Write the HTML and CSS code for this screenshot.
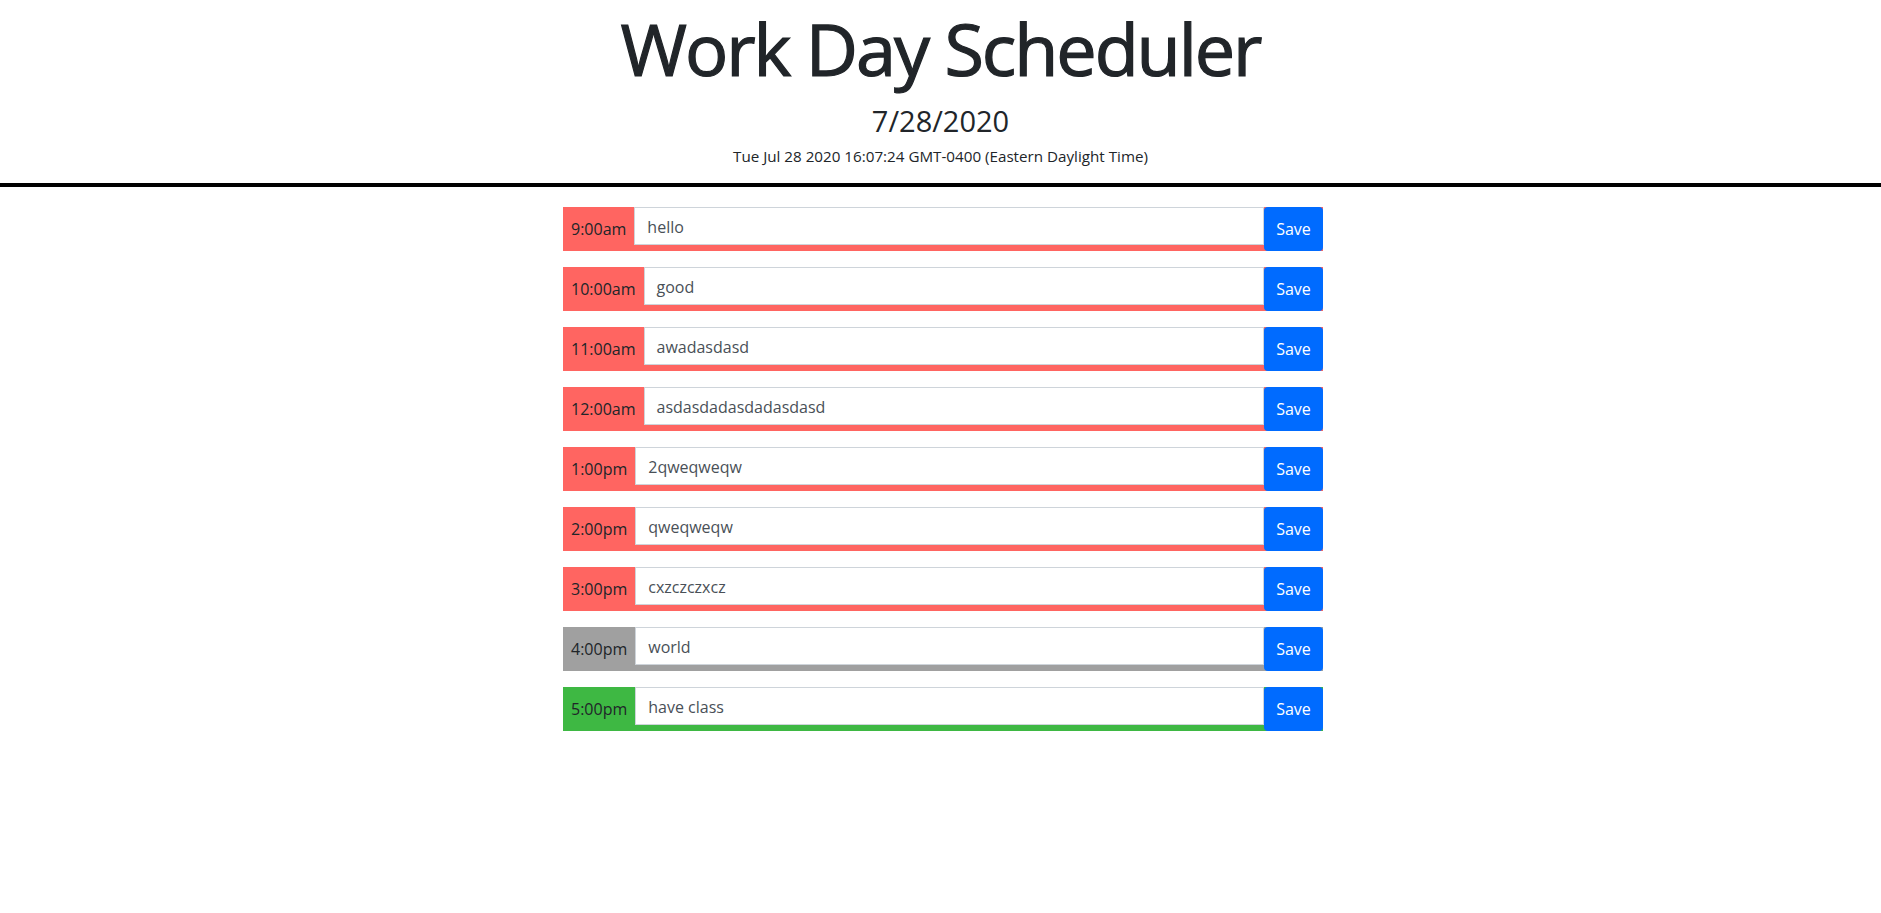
FILE: index.html
```html
<!DOCTYPE html>
<html lang="en">
<head>
<meta charset="utf-8">
<title>Work Day Scheduler</title>
<link rel="stylesheet" href="styles.css">
</head>
<body>
<header class="jumbotron">
  <h1 class="title">Work Day Scheduler</h1>
  <p class="date">7/28/2020</p>
  <p class="now">Tue Jul 28 2020 16:07:24 GMT-0400 (Eastern Daylight Time)</p>
</header>
<main class="container">
  <div class="row past"><div class="hour">9:00am</div><textarea class="description">hello</textarea><button class="saveBtn">Save</button></div>
  <div class="row past"><div class="hour">10:00am</div><textarea class="description">good</textarea><button class="saveBtn">Save</button></div>
  <div class="row past"><div class="hour">11:00am</div><textarea class="description">awadasdasd</textarea><button class="saveBtn">Save</button></div>
  <div class="row past"><div class="hour">12:00am</div><textarea class="description">asdasdadasdadasdasd</textarea><button class="saveBtn">Save</button></div>
  <div class="row past"><div class="hour">1:00pm</div><textarea class="description">2qweqweqw</textarea><button class="saveBtn">Save</button></div>
  <div class="row past"><div class="hour">2:00pm</div><textarea class="description">qweqweqw</textarea><button class="saveBtn">Save</button></div>
  <div class="row past"><div class="hour">3:00pm</div><textarea class="description">cxzczczxcz</textarea><button class="saveBtn">Save</button></div>
  <div class="row present"><div class="hour">4:00pm</div><textarea class="description">world</textarea><button class="saveBtn">Save</button></div>
  <div class="row future"><div class="hour">5:00pm</div><textarea class="description">have class</textarea><button class="saveBtn">Save</button></div>
</main>
</body>
</html>
```
FILE: styles.css
```css
* { box-sizing: border-box; }

html, body {
  margin: 0;
  padding: 0;
  background: #ffffff;
  color: #212529;
  font-family: "Open Sans", "Noto Sans", sans-serif;
  font-size: 16px;
}

.jumbotron {
  text-align: center;
  padding: 5px 0 15px;
  border-bottom: 4px solid #000000;
}

.title {
  margin: 0;
  font-size: 72px;
  line-height: 86px;
  font-weight: 400;
  letter-spacing: -2.1px;
  -webkit-text-stroke: 1.2px #212529;
  color: #212529;
}

.date {
  margin: 12px 0 0;
  font-size: 29px;
  line-height: 36px;
  font-weight: 400;
}

.now {
  margin: 5px 0 0;
  font-size: 15.2px;
  line-height: 24px;
}

.container {
  width: 765px;
  margin: 0 auto;
  padding: 20px 0 0 5px;
  display: flex;
  flex-direction: column;
  gap: 16px;
}

.row {
  display: flex;
  height: 44px;
  width: 760px;
  align-items: flex-start;
}

.past { background: #ff6561; }
.present { background: #a0a0a0; }
.future { background: #3eb843; }

.hour {
  height: 44px;
  padding: 0 8px 0 8px;
  display: flex;
  align-items: center;
  color: #212529;
  font-size: 16px;
  white-space: nowrap;
}

.description {
  flex: 1;
  height: 38px;
  margin: 0;
  padding: 7px 12px 5px 12px;
  border: 1px solid #ced4da;
  border-radius: 0;
  background: #ffffff;
  color: #495057;
  font-family: inherit;
  font-size: 16px;
  line-height: 24px;
  resize: none;
  overflow: hidden;
}

.saveBtn {
  width: 59px;
  height: 44px;
  margin: 0;
  border: none;
  border-radius: 4px;
  background: #006bff;
  color: #ffffff;
  font-family: inherit;
  font-size: 16px;
  padding: 0;
}
```
